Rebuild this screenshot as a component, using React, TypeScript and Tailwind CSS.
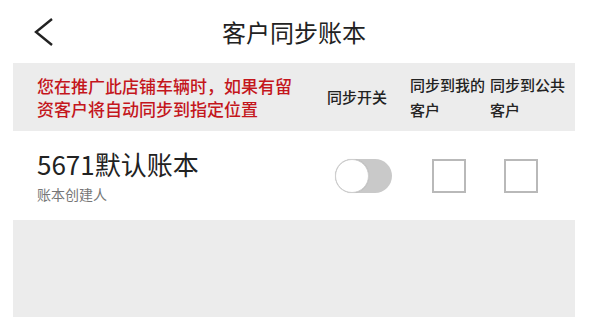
const font = { fontFamily: '"Noto Sans CJK SC", "Noto Sans", sans-serif' }

function Toggle() {
  return (
    <div className="relative h-[34px] w-[57px] rounded-full bg-[#c9c9c9]">
      <div className="absolute left-0 top-0 h-[34px] w-[34px] rounded-full border border-[#cfcfcf] bg-white shadow-[0_0_1px_rgba(0,0,0,0.15)]" />
    </div>
  )
}

function Checkbox() {
  return <div className="h-[34px] w-[34px] border-2 border-[#b9b9b9] bg-white" />
}

export default function App() {
  return (
    <div className="h-[317px] w-[598px] bg-white text-[#222]" style={font}>
      {/* nav bar */}
      <div className="relative flex h-[63px] items-center justify-center pr-[10px]">
        <svg className="absolute left-[33px] top-[17px]" width="22" height="30" viewBox="0 0 22 30">
          <polyline points="19,2 3,15 19,28" fill="none" stroke="#222" strokeWidth="2.4" />
        </svg>
        <span className="text-[24px] leading-none">客户同步账本</span>
      </div>

      <div className="ml-[13px] w-[562px]">
        {/* header */}
        <div className="flex h-[68px] items-center bg-[#ececec]">
          <div className="w-[309px] pl-[24px] text-[17px] font-medium leading-[23px] text-[#c4161c]">
            <div>您在推广此店铺车辆时，如果有留</div>
            <div>资客户将自动同步到指定位置</div>
          </div>
          <div className="w-[88px] pl-[5px] text-[15px] font-medium">同步开关</div>
          <div className="w-[80px] text-[15px] font-medium leading-[25px]">
            <div>同步到我的</div>
            <div>客户</div>
          </div>
          <div className="text-[15px] font-medium leading-[25px]">
            <div>同步到公共</div>
            <div>客户</div>
          </div>
        </div>

        {/* row */}
        <div className="flex h-[89px] items-center">
          <div className="w-[309px] pl-[24px]">
            <div className="text-[26px] leading-[30px]">5671默认账本</div>
            <div className="mt-[6px] text-[14px] leading-[18px] text-[#777]">账本创建人</div>
          </div>
          <div className="w-[88px] pl-[13px]">
            <Toggle />
          </div>
          <div className="w-[80px] pl-[22px]">
            <Checkbox />
          </div>
          <div className="pl-[14px]">
            <Checkbox />
          </div>
        </div>

        <div className="h-[97px] bg-[#ececec]" />
      </div>
    </div>
  )
}
